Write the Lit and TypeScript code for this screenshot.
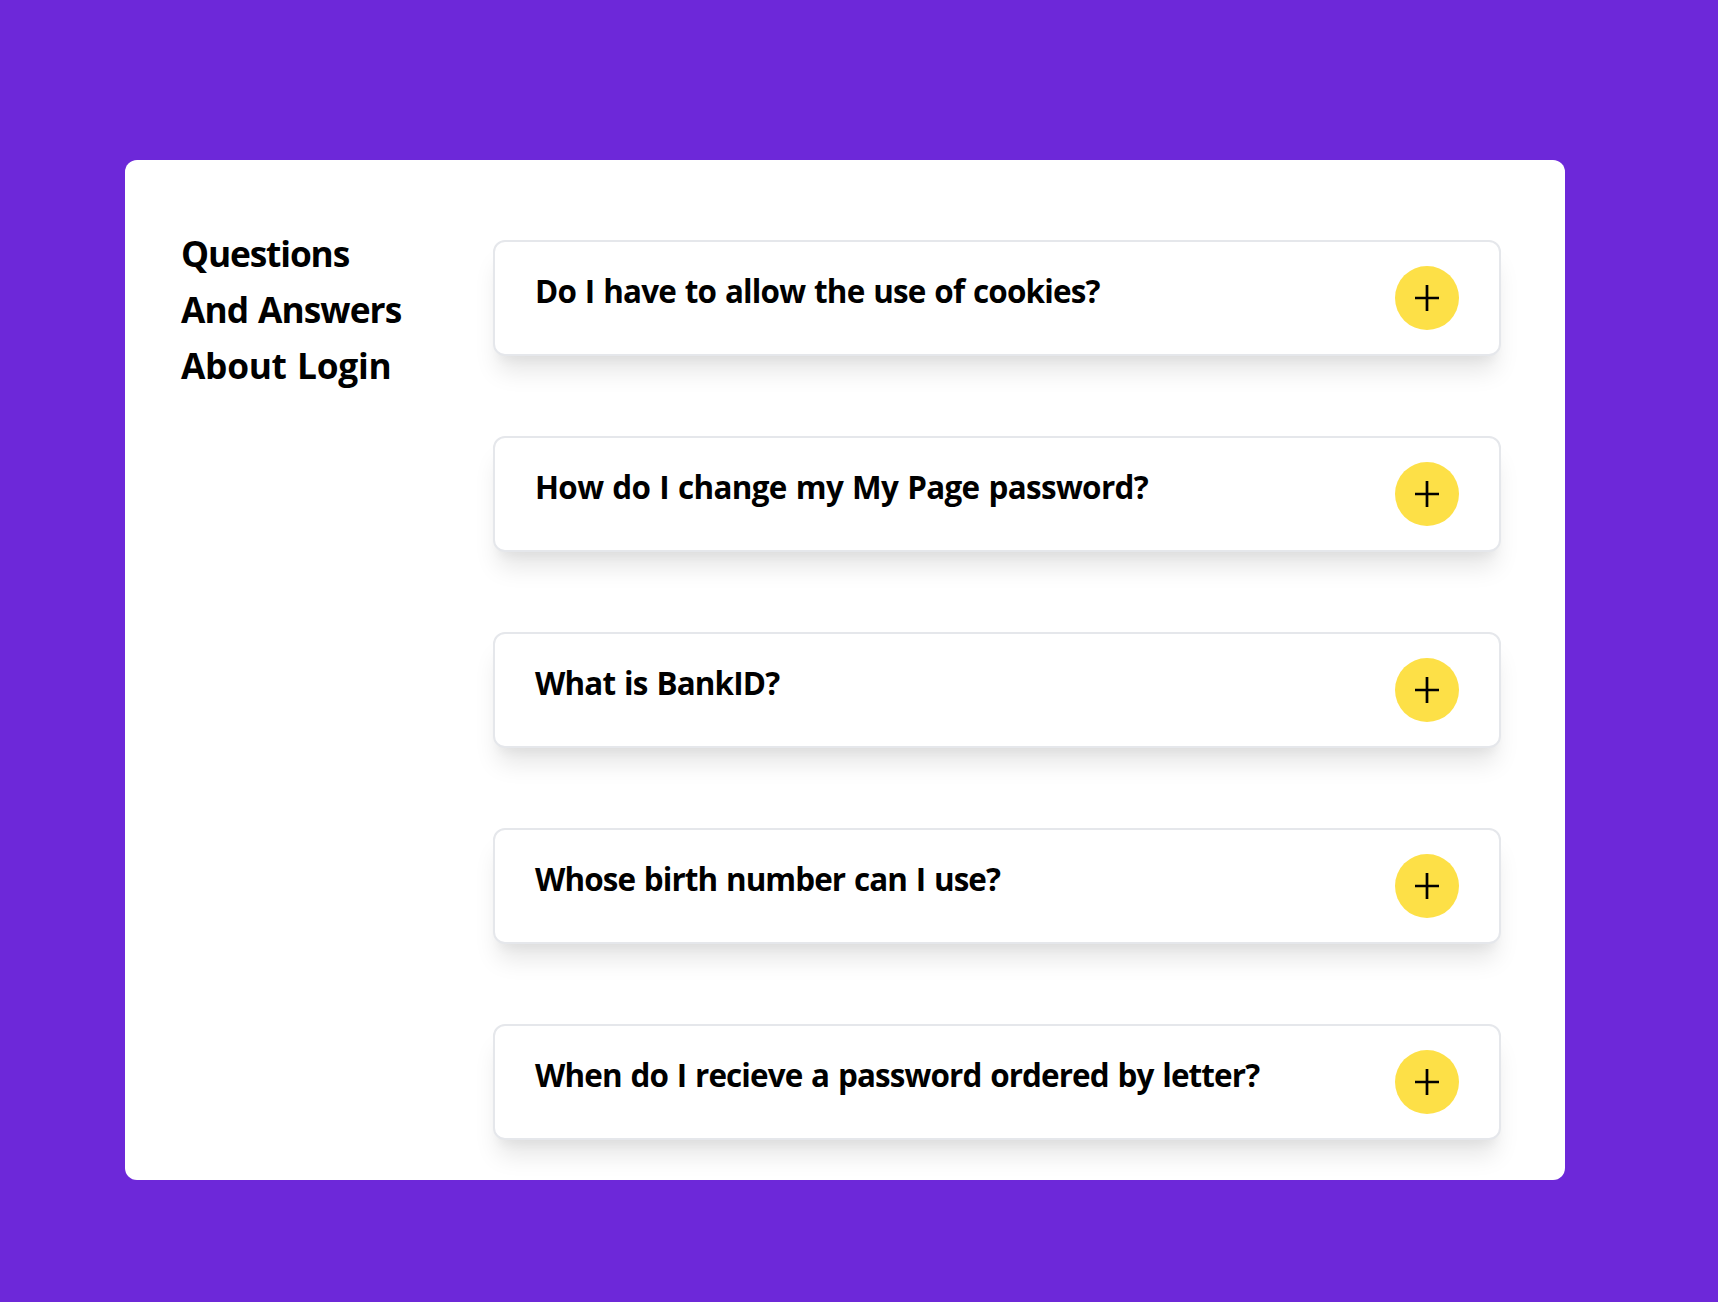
import { LitElement, html, css } from "lit";
import { customElement, property } from "lit/decorators.js";

interface Line {
  text: string;
  tracking: number;
}

const TITLE: Line[] = [
  { text: "Questions", tracking: -1.15 },
  { text: "And Answers", tracking: -0.9 },
  { text: "About Login", tracking: -0.28 },
];

const QUESTIONS: Line[] = [
  { text: "Do I have to allow the use of cookies?", tracking: -0.83 },
  { text: "How do I change my My Page password?", tracking: -0.66 },
  { text: "What is BankID?", tracking: -0.83 },
  { text: "Whose birth number can I use?", tracking: -0.91 },
  { text: "When do I recieve a password ordered by letter?", tracking: -0.88 },
];

@customElement("faq-item")
class FaqItem extends LitElement {
  @property() question = "";
  @property({ type: Number }) tracking = 0;

  static styles = css`
    :host {
      display: flex;
      box-sizing: border-box;
      justify-content: space-between;
      align-items: flex-start;
      height: 116px;
      padding: 24px 40px;
      border: 2px solid #e5e7eb;
      border-radius: 12px;
      background: #fff;
      box-shadow: 0 20px 25px -5px rgb(0 0 0 / 0.1),
        0 10px 10px -5px rgb(0 0 0 / 0.04);
    }
    .question {
      margin: 0;
      padding-top: 1px;
      font-size: 31.4px;
      line-height: 48px;
      font-weight: 700;
      word-spacing: 1.5px;
      white-space: nowrap;
    }
    .toggle {
      display: grid;
      place-items: center;
      width: 64px;
      height: 64px;
      padding: 0;
      border: 0;
      border-radius: 50%;
      background: #fde047;
      color: #000;
    }
    .plus {
      display: block;
      width: 26px;
      height: 26px;
    }
  `;

  render() {
    return html`
      <h2 class="question" style="letter-spacing:${this.tracking}px">${this.question}</h2>
      <button class="toggle" aria-label="Expand">
        <svg class="plus" viewBox="0 0 26 26">
          <path d="M1 13H25M13 0V26" fill="none" stroke="currentColor" stroke-width="2.7" />
        </svg>
      </button>
    `;
  }
}

@customElement("app-root")
class AppRoot extends LitElement {
  static styles = css`
    :host {
      display: block;
      box-sizing: border-box;
      height: 1302px;
      padding: 160px 153px 122px 125px;
      background: #6d28d9;
      color: #000;
      font-family: "Open Sans", "Noto Sans", sans-serif;
    }
    .panel {
      display: flex;
      justify-content: space-between;
      box-sizing: border-box;
      height: 1020px;
      padding: 0 64px 0 56px;
      border-radius: 12px;
      background: #fff;
    }
    .title {
      margin: 0;
      padding-top: 65px;
      font-size: 35.3px;
      line-height: 56px;
      font-weight: 700;
      word-spacing: 1.5px;
      white-space: nowrap;
    }
    .line {
      display: block;
    }
    .list {
      display: flex;
      flex-direction: column;
      gap: 80px;
      width: 1008px;
      padding-top: 80px;
    }
  `;

  render() {
    return html`
      <main class="panel">
        <h1 class="title">
          ${TITLE.map(
            (l) => html`<span class="line" style="letter-spacing:${l.tracking}px">${l.text}</span>`
          )}
        </h1>
        <section class="list">
          ${QUESTIONS.map(
            (q) => html`<faq-item .question=${q.text} .tracking=${q.tracking}></faq-item>`
          )}
        </section>
      </main>
    `;
  }
}
